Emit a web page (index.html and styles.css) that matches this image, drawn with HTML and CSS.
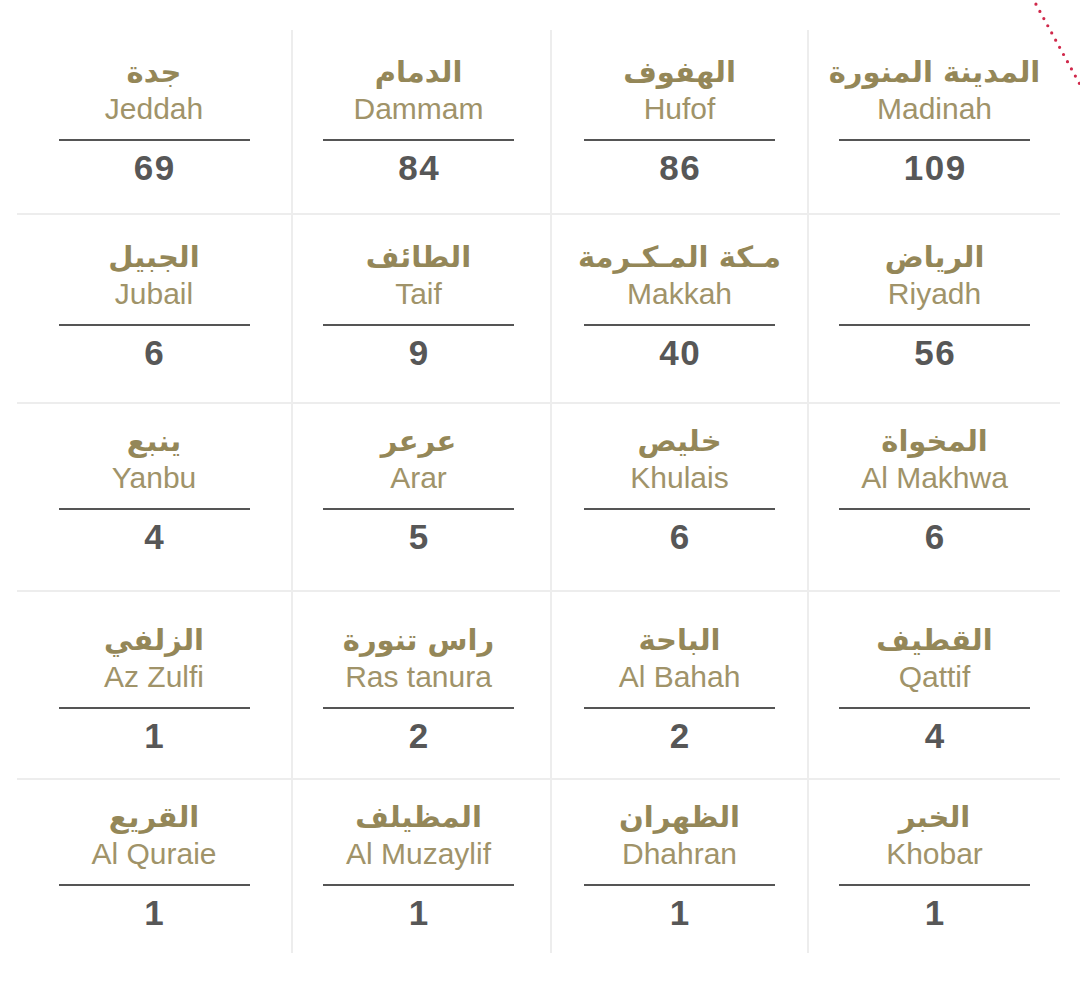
FILE: index.html
```html
<!DOCTYPE html>
<html lang="en">
<head>
<meta charset="utf-8">
<title>Cities</title>
<link rel="stylesheet" href="styles.css">
</head>
<body>
<svg class="route-mark" width="60" height="100" viewBox="0 0 60 100" aria-hidden="true">
  <line x1="12" y1="-3" x2="63" y2="90" stroke="#d0294b" stroke-width="3.2" stroke-linecap="round" stroke-dasharray="0 8.2"/>
</svg>
<main class="board" dir="rtl">
  <div class="row row--1">
    <div class="cell"><span class="ar">المدينة المنورة</span><span class="en">Madinah</span><span class="rule"></span><span class="num">109</span></div>
    <div class="cell"><span class="ar">الهفوف</span><span class="en">Hufof</span><span class="rule"></span><span class="num">86</span></div>
    <div class="cell"><span class="ar">الدمام</span><span class="en">Dammam</span><span class="rule"></span><span class="num">84</span></div>
    <div class="cell"><span class="ar">جدة</span><span class="en">Jeddah</span><span class="rule"></span><span class="num">69</span></div>
  </div>
  <div class="row row--2">
    <div class="cell"><span class="ar">الرياض</span><span class="en">Riyadh</span><span class="rule"></span><span class="num">56</span></div>
    <div class="cell"><span class="ar">مـكة المـكـرمة</span><span class="en">Makkah</span><span class="rule"></span><span class="num">40</span></div>
    <div class="cell"><span class="ar">الطائف</span><span class="en">Taif</span><span class="rule"></span><span class="num">9</span></div>
    <div class="cell"><span class="ar">الجبيل</span><span class="en">Jubail</span><span class="rule"></span><span class="num">6</span></div>
  </div>
  <div class="row row--3">
    <div class="cell"><span class="ar">المخواة</span><span class="en">Al Makhwa</span><span class="rule"></span><span class="num">6</span></div>
    <div class="cell"><span class="ar">خليص</span><span class="en">Khulais</span><span class="rule"></span><span class="num">6</span></div>
    <div class="cell"><span class="ar">عرعر</span><span class="en">Arar</span><span class="rule"></span><span class="num">5</span></div>
    <div class="cell"><span class="ar">ينبع</span><span class="en">Yanbu</span><span class="rule"></span><span class="num">4</span></div>
  </div>
  <div class="row row--4">
    <div class="cell"><span class="ar">القطيف</span><span class="en">Qattif</span><span class="rule"></span><span class="num">4</span></div>
    <div class="cell"><span class="ar">الباحة</span><span class="en">Al Bahah</span><span class="rule"></span><span class="num">2</span></div>
    <div class="cell"><span class="ar">راس تنورة</span><span class="en">Ras tanura</span><span class="rule"></span><span class="num">2</span></div>
    <div class="cell"><span class="ar">الزلفي</span><span class="en">Az Zulfi</span><span class="rule"></span><span class="num">1</span></div>
  </div>
  <div class="row row--5">
    <div class="cell"><span class="ar">الخبر</span><span class="en">Khobar</span><span class="rule"></span><span class="num">1</span></div>
    <div class="cell"><span class="ar">الظهران</span><span class="en">Dhahran</span><span class="rule"></span><span class="num">1</span></div>
    <div class="cell"><span class="ar">المظيلف</span><span class="en">Al Muzaylif</span><span class="rule"></span><span class="num">1</span></div>
    <div class="cell"><span class="ar">القريع</span><span class="en">Al Quraie</span><span class="rule"></span><span class="num">1</span></div>
  </div>
</main>
</body>
</html>
```

FILE: styles.css
```css
html, body {
  margin: 0;
  padding: 0;
  background: #ffffff;
}

body {
  position: relative;
  width: 1080px;
  height: 984px;
  overflow: hidden;
  font-family: "Liberation Sans", Arial, sans-serif;
}

.route-mark {
  position: absolute;
  top: 0;
  right: 0;
}

.board {
  width: 1043px;
  margin: 30px 0 0 17px;
}

.row {
  display: grid;
  grid-template-columns: 253px 257px 259px 274px;
  border-bottom: 2px solid #ededed;
  box-sizing: border-box;
}

.row--5 {
  border-bottom: none;
}

.row--1 { height: 185px; }
.row--2 { height: 189px; }
.row--3 { height: 188px; }
.row--4 { height: 188px; }
.row--5 { height: 173px; }

.cell {
  display: flex;
  flex-direction: column;
  align-items: center;
  border-inline-end: 2px solid #ededed;
  box-sizing: border-box;
  padding-top: 22px;
}

.cell:nth-child(3) {
  padding-inline-start: 6px;
}

.cell:last-child {
  border-inline-end: none;
}

.row--3 .cell,
.row--5 .cell { padding-top: 17px; }
.row--4 .cell { padding-top: 28px; }

.ar {
  font-family: "DejaVu Sans", sans-serif;
  font-weight: bold;
  font-size: 29px;
  line-height: 36px;
  margin-top: 2px;
  margin-bottom: -2px;
  color: #948758;
  white-space: nowrap;
}

.en {
  direction: ltr;
  font-size: 30px;
  line-height: 38px;
  margin-top: 2px;
  margin-bottom: -2px;
  color: #a09369;
  white-space: nowrap;
}

.rule {
  display: block;
  width: 191px;
  height: 2px;
  margin-top: 13px;
  background: #555555;
}

.num {
  direction: ltr;
  font-weight: bold;
  font-size: 35px;
  line-height: 40px;
  letter-spacing: 1.5px;
  text-indent: 1.5px;
  margin-top: 7px;
  color: #575757;
}
```
